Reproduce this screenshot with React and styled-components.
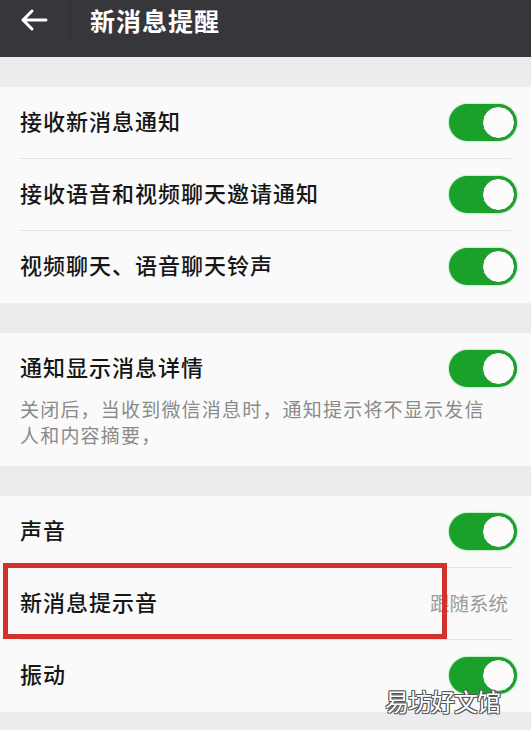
import React from "react";
import styled, { createGlobalStyle } from "styled-components";

const GlobalStyle = createGlobalStyle`
  html, body {
    margin: 0;
    padding: 0;
    background: #ececee;
  }
  body {
    font-family: "Noto Sans CJK SC", "Noto Sans", sans-serif;
  }
`;

const sections = [
  {
    rows: [
      { label: "接收新消息通知", toggle: true },
      { label: "接收语音和视频聊天邀请通知", toggle: true },
      { label: "视频聊天、语音聊天铃声", toggle: true },
    ],
  },
  {
    rows: [
      {
        label: "通知显示消息详情",
        toggle: true,
        note: "关闭后，当收到微信消息时，通知提示将不显示发信人和内容摘要，",
      },
    ],
  },
  {
    rows: [
      { label: "声音", toggle: true },
      { label: "新消息提示音", value: "跟随系统", marked: true },
      { label: "振动", toggle: true },
    ],
  },
];

export default function App() {
  return (
    <Page>
      <GlobalStyle />
      <Header>
        <BackButton aria-label="back">
          <svg width="28" height="24" viewBox="0 0 28 24" fill="none">
            <path
              d="M26 12H3M12 3L3 12l9 9"
              stroke="#fff"
              strokeWidth="3"
              strokeLinecap="round"
              strokeLinejoin="round"
            />
          </svg>
        </BackButton>
        <HeaderDivider />
        <Title>新消息提醒</Title>
      </Header>

      {sections.map((section, i) => (
        <Group key={i}>
          {section.rows.map((row, j) => (
            <Row key={row.label} $last={j === section.rows.length - 1}>
              <RowMain>
                <Label>{row.label}</Label>
                {row.toggle && <Toggle />}
                {row.value && <Value>{row.value}</Value>}
              </RowMain>
              {row.note && <Note>{row.note}</Note>}
              {row.marked && <Marker />}
            </Row>
          ))}
        </Group>
      ))}

      <Watermark>易坊好文馆</Watermark>
    </Page>
  );
}

function Toggle() {
  return (
    <Switch>
      <Knob />
    </Switch>
  );
}

const Page = styled.div`
  position: relative;
  width: 531px;
  height: 730px;
  overflow: hidden;
  background: #ececee;
`;

const Header = styled.div`
  height: 57px;
  background: #36363b;
  display: flex;
  align-items: center;
  padding-left: 20px;
  margin-bottom: 30px;
  box-sizing: border-box;
  padding-bottom: 18px;
`;

const BackButton = styled.div`
  width: 30px;
  height: 24px;
  display: flex;
  align-items: center;
`;

const HeaderDivider = styled.div`
  width: 1px;
  height: 34px;
  background: #2f2f33;
  margin: 0 19px 0 20px;
`;

const Title = styled.h1`
  margin: 0;
  color: #ffffff;
  font-size: 25px;
  font-weight: 700;
  letter-spacing: 1px;
`;

const Group = styled.div`
  background: #fafafa;
  margin-bottom: 30px;
`;

const Row = styled.div`
  position: relative;
  margin-left: 20px;
  padding-right: 14px;
  display: flex;
  flex-direction: column;

  &::after {
    content: "";
    display: ${({ $last }) => ($last ? "none" : "block")};
    position: absolute;
    left: 0;
    right: 20px;
    bottom: 0;
    height: 1px;
    background: #e4e4e6;
  }
`;

const RowMain = styled.div`
  display: flex;
  align-items: center;
  justify-content: space-between;
  height: 72px;
`;

const Label = styled.span`
  font-size: 22px;
  font-weight: 500;
  color: #161616;
  letter-spacing: 1px;
  margin-bottom: 6px;
`;

const Value = styled.span`
  font-size: 19.5px;
  color: #9a9a9a;
  margin-right: 9px;
  margin-bottom: 4px;
`;

const Note = styled.p`
  margin: -9px 20px 0 0;
  padding-bottom: 18px;
  font-size: 19px;
  line-height: 26px;
  color: #8a8a8a;
  letter-spacing: 1.2px;
`;

const Switch = styled.div`
  width: 68px;
  height: 37px;
  border-radius: 19px;
  background: #1aa12b;
  box-shadow: 0 0 2px #47d35a;
  position: relative;
  flex-shrink: 0;
  margin-bottom: 2px;
`;

const Knob = styled.div`
  position: absolute;
  right: 2px;
  top: 2px;
  width: 31px;
  height: 31px;
  border-radius: 50%;
  background: #fcfcfc;
  border: 1px solid #138f22;
`;

const Marker = styled.div`
  position: absolute;
  left: -17px;
  top: -5px;
  width: 444px;
  height: 76px;
  box-sizing: border-box;
  border: 5px solid #d3302e;
  pointer-events: none;
`;

const Watermark = styled.div`
  position: absolute;
  left: 385px;
  top: 683px;
  font-size: 24px;
  color: #ffffff;
  text-shadow: -1px -1px 0 #555, 1px -1px 0 #555, -1px 1px 0 #555, 1px 1px 0 #555;
  letter-spacing: -1px;
`;
